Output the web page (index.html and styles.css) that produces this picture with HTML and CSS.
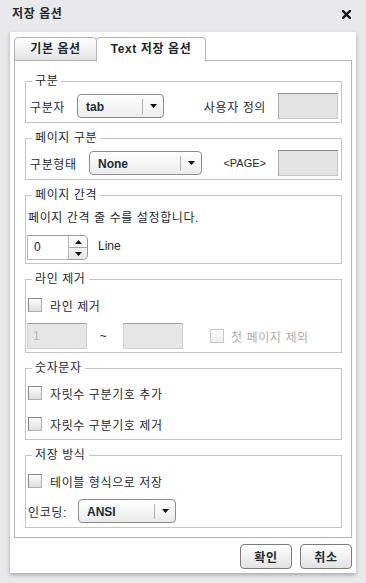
FILE: index.html
```html
<!DOCTYPE html>
<html lang="ko">
<head>
    <meta charset="UTF-8">
    <title>저장 옵션</title>
    <link rel="stylesheet" href="styles.css">
</head>
<body>
    <div class="dialog">
        <div class="titlebar">
            <span class="title">저장 옵션</span>
            <span class="close">
                <svg width="9" height="9" viewBox="0 0 9 9"><path d="M1 1L8 8M8 1L1 8" stroke="#141414" stroke-width="2.4" stroke-linecap="square"/></svg>
            </span>
        </div>

        <div class="panel">
            <div class="tabs">
                <div class="tab">기본 옵션</div>
                <div class="tab active">Text 저장 옵션</div>
            </div>

            <div class="tab-body">
                <!-- 구분 -->
                <fieldset class="group">
                    <legend>구분</legend>
                    <div class="row">
                        <span class="lbl lbl-sep">구분자</span>
                        <div class="select sel-tab">
                            <span class="value">tab</span>
                            <span class="drop"><svg width="7" height="4" viewBox="0 0 7 4"><polygon points="0,0 7,0 3.5,4" fill="#111"/></svg></span>
                        </div>
                        <span class="lbl-right">사용자 정의</span>
                        <span class="box"></span>
                    </div>
                </fieldset>

                <!-- 페이지 구분 -->
                <fieldset class="group">
                    <legend>페이지 구분</legend>
                    <div class="row">
                        <span class="lbl lbl-type">구분형태</span>
                        <div class="select sel-none">
                            <span class="value">None</span>
                            <span class="drop"><svg width="7" height="4" viewBox="0 0 7 4"><polygon points="0,0 7,0 3.5,4" fill="#111"/></svg></span>
                        </div>
                        <span class="lbl-right small">&lt;PAGE&gt;</span>
                        <span class="box"></span>
                    </div>
                </fieldset>

                <!-- 페이지 간격 -->
                <fieldset class="group">
                    <legend>페이지 간격</legend>
                    <div class="desc">페이지 간격 줄 수를 설정합니다.</div>
                    <div class="row row-spin">
                        <div class="spin">
                            <span class="spin-input">0</span>
                            <span class="spin-btns">
                                <span class="spin-btn"><svg width="7" height="4" viewBox="0 0 7 4"><polygon points="0,4 7,4 3.5,0" fill="#111"/></svg></span>
                                <span class="spin-btn"><svg width="7" height="4" viewBox="0 0 7 4"><polygon points="0,0 7,0 3.5,4" fill="#111"/></svg></span>
                            </span>
                        </div>
                        <span class="unit">Line</span>
                    </div>
                </fieldset>

                <!-- 라인 제거 -->
                <fieldset class="group">
                    <legend>라인 제거</legend>
                    <div class="row row-check">
                        <span class="check"></span>
                        <span class="check-lbl">라인 제거</span>
                    </div>
                    <div class="row row-range">
                        <span class="box box-dis first">1</span>
                        <span class="tilde">~</span>
                        <span class="box box-dis"></span>
                        <span class="check check-dis"></span>
                        <span class="check-lbl dis">첫 페이지 제외</span>
                    </div>
                </fieldset>

                <!-- 숫자문자 -->
                <fieldset class="group group-num">
                    <legend>숫자문자</legend>
                    <div class="row">
                        <span class="check"></span>
                        <span class="check-lbl">자릿수 구분기호 추가</span>
                    </div>
                    <div class="row row-next">
                        <span class="check"></span>
                        <span class="check-lbl">자릿수 구분기호 제거</span>
                    </div>
                </fieldset>

                <!-- 저장 방식 -->
                <fieldset class="group group-save">
                    <legend>저장 방식</legend>
                    <div class="row row-check">
                        <span class="check"></span>
                        <span class="check-lbl">테이블 형식으로 저장</span>
                    </div>
                    <div class="row row-enc">
                        <span class="lbl lbl-enc">인코딩:</span>
                        <div class="select sel-ansi">
                            <span class="value">ANSI</span>
                            <span class="drop"><svg width="7" height="4" viewBox="0 0 7 4"><polygon points="0,0 7,0 3.5,4" fill="#111"/></svg></span>
                        </div>
                    </div>
                </fieldset>
            </div>

            <div class="actions">
                <button class="btn">확인</button>
                <button class="btn">취소</button>
            </div>
        </div>
    </div>
</body>
</html>
```

FILE: styles.css
```css
* {
    margin: 0;
    padding: 0;
    box-sizing: border-box;
}

body {
    background: #e9e8ea;
    font-family: 'Liberation Sans', 'Noto Sans CJK KR', sans-serif;
    font-size: 12px;
    letter-spacing: 0.6px;
    color: #1b2a31;
    width: 366px;
    height: 583px;
    overflow: hidden;
}

.titlebar {
    height: 32px;
    display: flex;
    align-items: flex-start;
    justify-content: space-between;
    padding: 0 15px 0 12px;
}

.title {
    font-weight: 700;
    line-height: 28px;
    font-size: 12px;
}

.close {
    display: flex;
    padding-top: 10px;
}

.panel {
    margin: 0 10px;
    background: #fff;
    padding: 5px 4px 4px 4px;
    box-shadow: 0 2px 4px rgba(0, 0, 0, 0.28);
}

.tabs {
    display: flex;
    height: 23px;
    position: relative;
    z-index: 1;
}

.tab {
    width: 83px;
    height: 24px;
    border: 1px solid #b4b4b4;
    border-radius: 4px 4px 0 0;
    background: linear-gradient(#ffffff, #e4e4e4);
    font-weight: 700;
    text-align: center;
    line-height: 23px;
}

.tab.active {
    width: 110px;
    margin-left: -1px;
    background: #fff;
    border-bottom-color: #fff;
    height: 25px;
}

.tab-body {
    border: 1px solid #b4b4b4;
    padding: 13px 9px 9px 10px;
}

.group {
    border: 1px solid #c4c4c4;
    padding: 5px 3px 3px 2px;
    min-width: 0;
}

.group + .group {
    margin-top: 8px;
}

.group legend {
    margin-left: 4px;
    padding: 0 3px;
    line-height: 14px;
}

.row {
    display: flex;
    align-items: center;
    height: 26px;
}

.lbl {
    padding-left: 2px;
}

.lbl-sep { width: 49px; }
.lbl-type { width: 61px; }
.lbl-enc { width: 50px; padding-left: 0; }

.lbl-right {
    margin-left: auto;
    margin-right: 12px;
}

.lbl-right.small {
    font-size: 11px;
    letter-spacing: 0;
}

.select {
    display: flex;
    align-items: center;
    height: 24px;
    border: 1px solid #8c8c8c;
    border-radius: 4px;
    background: linear-gradient(#ffffff, #ebebeb);
    font-weight: 700;
    letter-spacing: 0;
    color: #1b2b38;
}

.select .value {
    flex: 1;
    padding-left: 8px;
    padding-top: 2px;
}

.select .drop {
    width: 21px;
    height: 15px;
    border-left: 1px solid #b0b0b0;
    display: flex;
    align-items: center;
    justify-content: center;
}

.sel-tab { width: 87px; }
.sel-none { width: 113px; }
.sel-ansi { width: 98px; }

.box {
    width: 60px;
    height: 26px;
    background: #e4e4e4;
    border: 1px solid #c6c6c6;
    border-top-color: #8c8c8c;
    border-left-color: #a8a8a8;
}

.desc {
    height: 22px;
    line-height: 22px;
}

.row-spin {
    margin-top: 6px;
    height: 25px;
}

.spin {
    display: flex;
    height: 25px;
    margin-left: -1px;
}

.spin-input {
    width: 42px;
    border: 1px solid #b8b8b8;
    border-top-color: #9a9a9a;
    padding-left: 6px;
    line-height: 23px;
}

.spin-btns {
    width: 19px;
    display: flex;
    flex-direction: column;
    border: 1px solid #9a9a9a;
    border-left: none;
    border-radius: 0 5px 5px 0;
    background: linear-gradient(#ffffff, #e8e8e8);
}

.spin-btn {
    flex: 1;
    display: flex;
    align-items: center;
    justify-content: center;
}

.spin-btn + .spin-btn {
    border-top: 1px solid #a8a8a8;
}

.unit {
    margin-left: 10px;
    margin-top: -3px;
    letter-spacing: 0;
}

.check {
    width: 14px;
    height: 14px;
    border: 1px solid #858585;
    border-right-color: #b0b0b0;
    border-bottom-color: #b0b0b0;
    background: linear-gradient(#fbfbfb, #dedede);
    flex-shrink: 0;
}

.check-lbl {
    margin-left: 8px;
}

.row-check {
    height: 28px;
}

.row-range {
    margin-top: 4px;
}

.box-dis {
    width: 60px;
    background: #e6e6e6;
    border-color: #d0d0d0;
    border-top-color: #a0a0a0;
    color: #b8b8b8;
    padding-left: 5px;
    line-height: 24px;
}

.box-dis.first {
    margin-left: -1px;
}

.tilde {
    width: 36px;
    padding-right: 3px;
    text-align: center;
}

.check-dis {
    margin-left: 27px;
    border-color: #c8c8c8;
    background: linear-gradient(#fdfdfd, #ececec);
}

.check-lbl.dis {
    color: #adadad;
    margin-left: 7px;
}

.group-num {
    padding-bottom: 2px;
}

.row-next {
    margin-top: 5px;
}

.group-save {
    padding-bottom: 4px;
}

.row-enc {
    margin-top: 4px;
    height: 24px;
}

.actions {
    display: flex;
    justify-content: flex-end;
    gap: 8px;
    margin-top: 6px;
}

.btn {
    width: 52px;
    height: 25px;
    border: 1px solid #7c7c7c;
    border-radius: 4px;
    background: linear-gradient(#ffffff, #e2e2e2);
    font-family: 'Noto Sans CJK KR', sans-serif;
    font-size: 12px;
    font-weight: 700;
    letter-spacing: 0.6px;
    color: #1b2a31;
}
```
